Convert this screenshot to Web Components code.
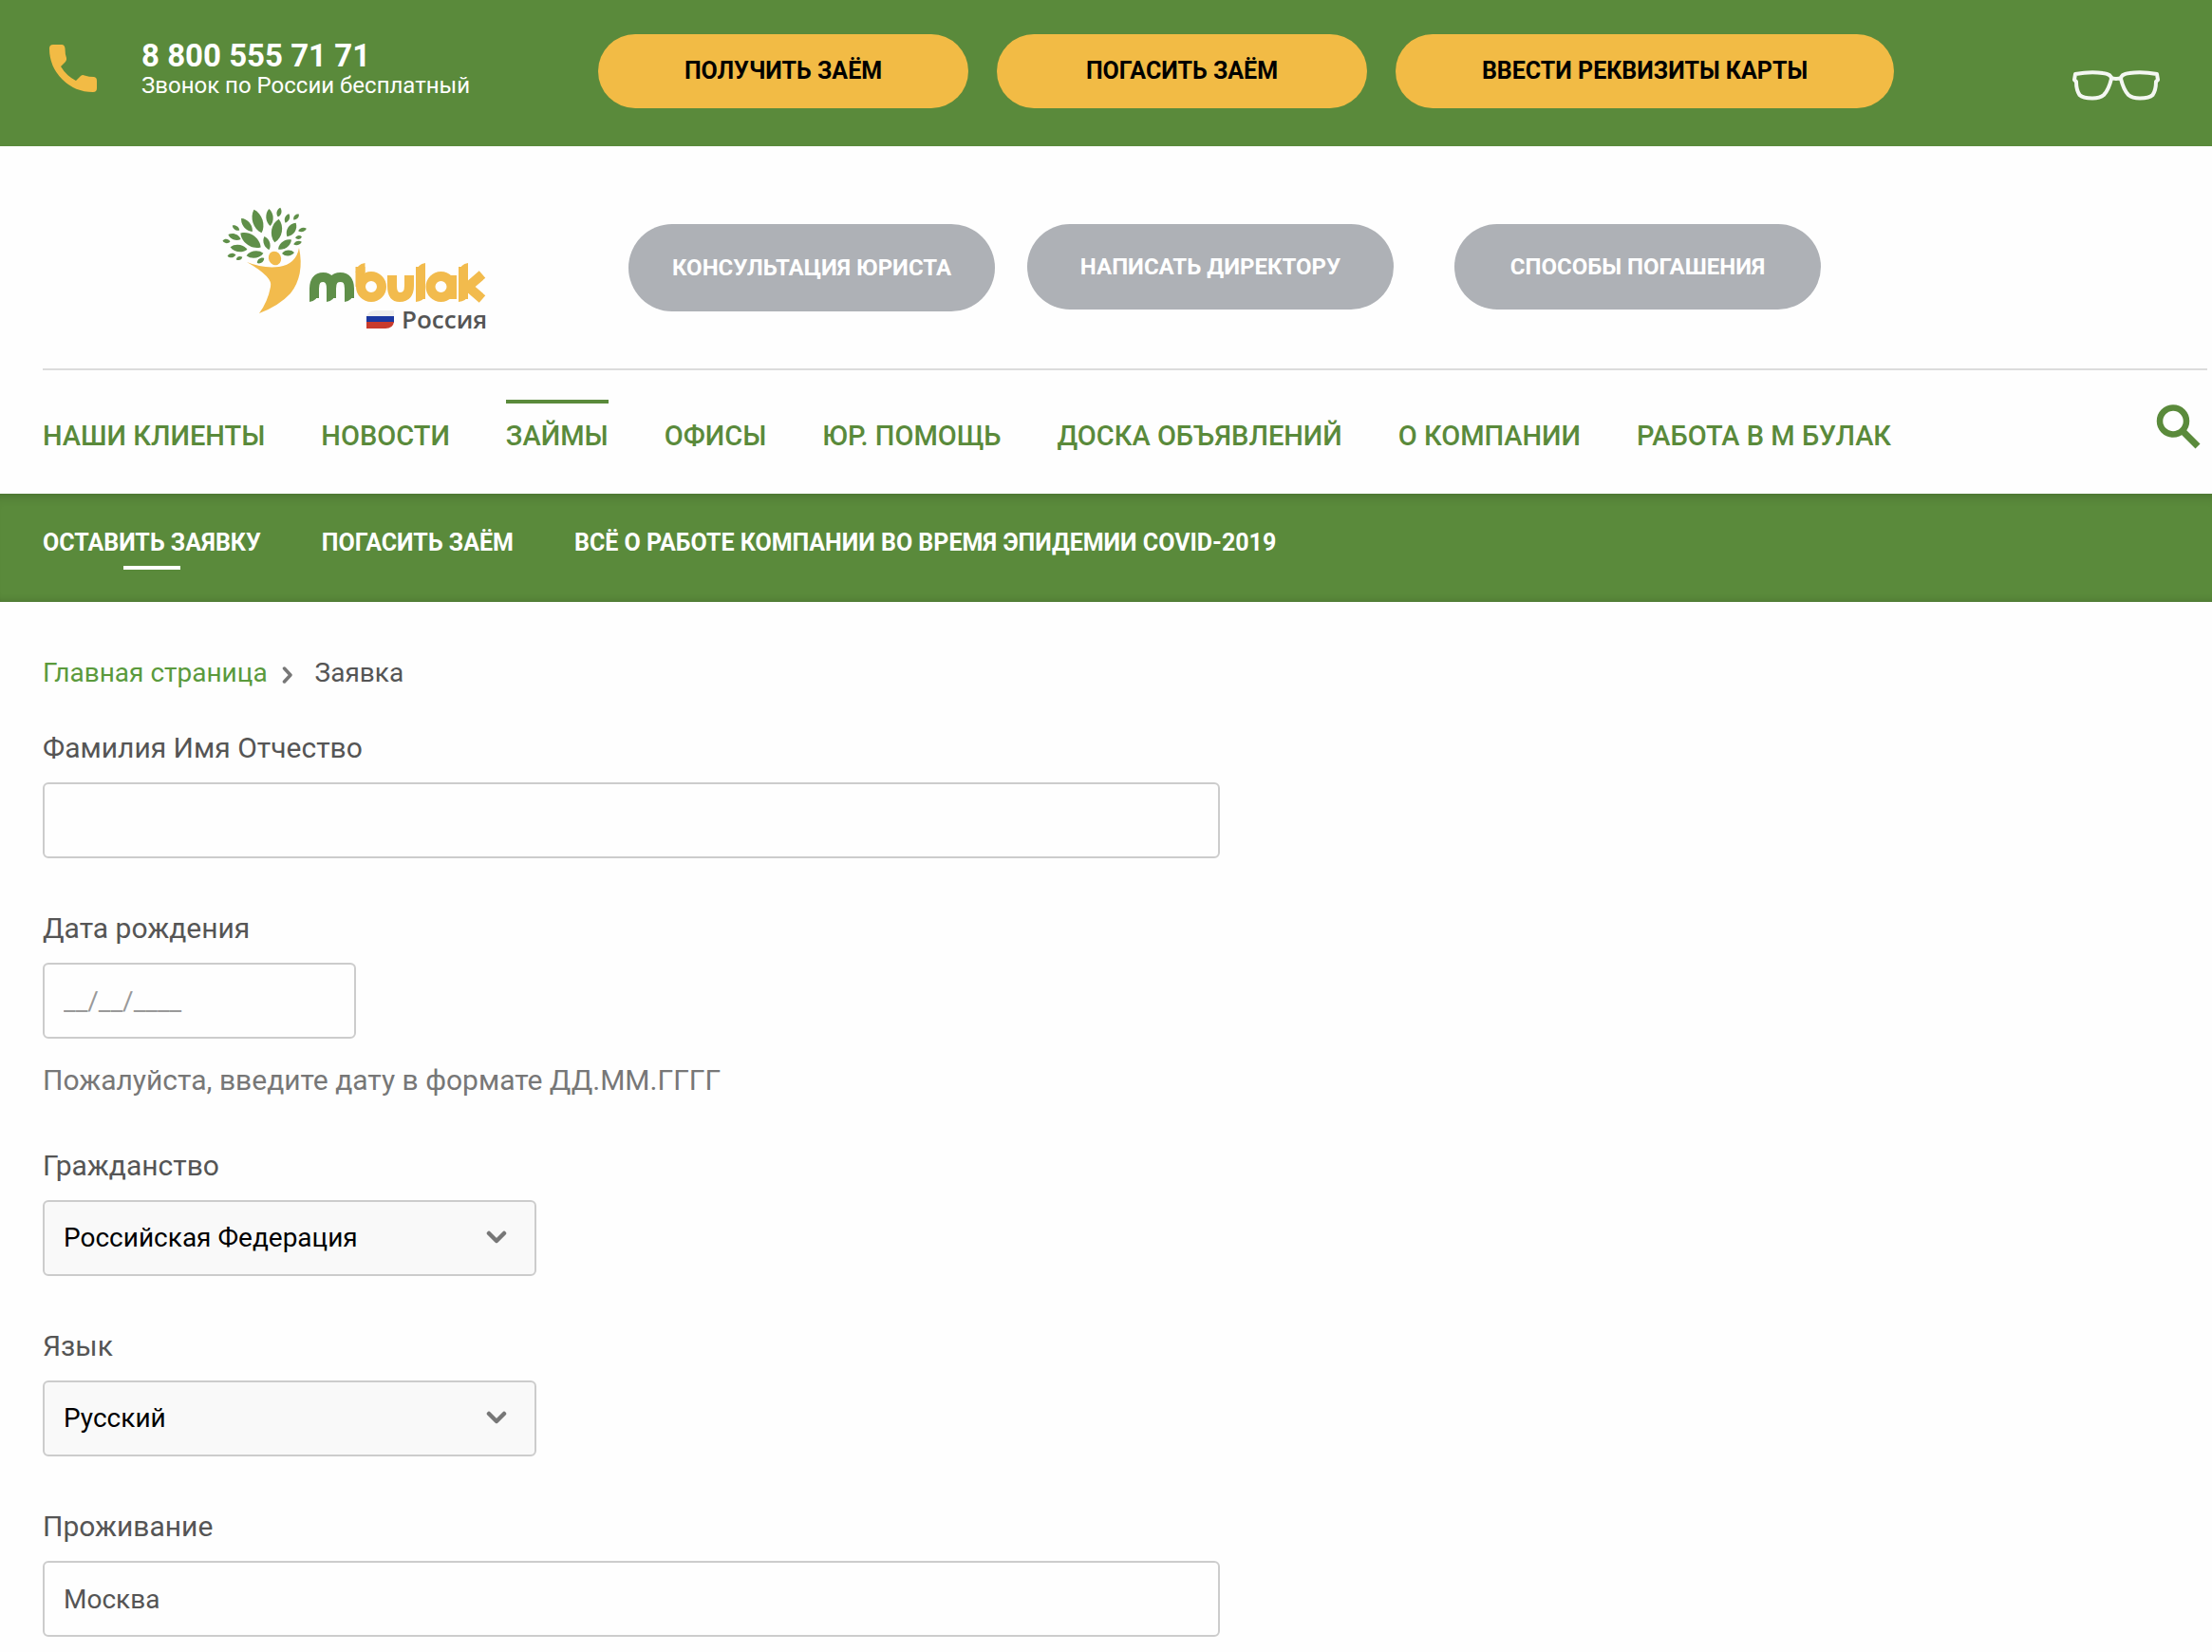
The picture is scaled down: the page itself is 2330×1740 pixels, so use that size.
<!DOCTYPE html>
<html lang="ru">
<head>
<meta charset="utf-8">
<title>Заявка — М Булак</title>
<style>
body{margin:0;background:#fefefe;font-family:Roboto,"Noto Sans",sans-serif;color:#555}
</style>
</head>
<body>
<mb-page></mb-page>
<script>
const define = (name, html, setup) => {
  const tpl = document.createElement('template');
  tpl.innerHTML = html;
  customElements.define(name, class extends HTMLElement {
    constructor() {
      super();
      this.attachShadow({mode: 'open'}).append(tpl.content.cloneNode(true));
    }
    connectedCallback() { if (setup) setup(this, this.shadowRoot); }
  });
};

define('mb-pill', `
<style>
:host{display:block;width:390px;--h:78px}
button{display:block;width:100%;height:var(--h);border:0;border-radius:46px;padding:0;background:#f2bb45;color:#000;font:700 25px/28px Roboto,sans-serif;text-transform:uppercase;cursor:pointer}
:host([wide]){width:525px}
:host([muted]){--h:90px;width:386px}
:host([muted][tall]){--h:92px}
:host([muted]) button{background:#aeb1b6;color:#fff;font-size:24px}
</style>
<button type="button"><slot></slot></button>`);

define('mb-topbar', `
<style>
:host{display:flex;align-items:flex-start;height:154px;background:#5a8a3b;color:#fff;box-sizing:border-box;padding:36px 54px 0 45px}
.phone{display:flex;width:585px;gap:40px}
.phone svg{margin-top:4px}
a{color:inherit;text-decoration:none;display:block}
.num{font-weight:700;font-size:33px;line-height:38px;margin-top:4px}
.sub{font-size:24px;line-height:24px}
.btns{display:flex;gap:30px}
.eye{margin:37px 0 0 auto;border:0;background:none;padding:0;display:block}
svg{display:block}
</style>
<div class="phone">
<svg width="64" height="64" viewBox="0 0 64 64" fill="#f2bb45"><path d="M11 7H20Q23 7 23.500 11Q23.500 17 25 21Q25.500 23.500 24 25L19 30Q25 40 35 45L40 40Q42 38.500 44 39.500Q49 41 54 41Q57 41.500 57 45V53Q57 57 53 57Q34 57 20.500 43.500Q7 30 7 11Q7 7 11 7Z"/></svg>
<div><a class="num" href="tel:88005557171">8 800 555 71 71</a><div class="sub">Звонок по России бесплатный</div></div>
</div>
<div class="btns"><mb-pill>Получить заём</mb-pill><mb-pill>Погасить заём</mb-pill><mb-pill wide>Ввести реквизиты карты</mb-pill></div>
<button class="eye" type="button" aria-label="Версия для слабовидящих"><svg width="94" height="34" viewBox="0 0 94 34" fill="none" stroke="#f4f7f2" stroke-width="4" stroke-linejoin="round"><path id="lens" d="M4 5Q20 2 33 4Q42 5 42 10Q39 22 34 27Q30 30.500 22 30.500Q12 30.500 8.500 27Q5 22 5 13L3 11Z"/><path d="M90 5Q74 2 61 4Q52 5 52 10Q55 22 60 27Q64 30.500 72 30.500Q82 30.500 85.500 27Q89 22 89 13L91 11ZM41 8.500Q47 11.500 53 8.500"/></svg></button>`);

define('mb-logo', `
<style>:host{display:block}a,svg{display:block}</style>
<a href="#" aria-label="mbulak Россия">
<svg width="300" height="150" viewBox="230 216 300 150">
<g id="leaves" fill="#5f8f49"></g>
<ellipse cx="289.500" cy="272" rx="6.500" ry="7.500" transform="rotate(-25 289.500 272)" fill="#f2bb4d"/>
<path d="M260 276Q277 283 294 281Q312 278 315 261Q321 290 306 309Q294 322 273 330Q282 318 285 302Q288 292 260 276Z" fill="#f2bb4d"/>
<g fill="none" stroke-width="10">
<path stroke="#5f8f49" d="M331 314V304Q331 292 340.500 292Q349 292 349 304V314M349 304Q349 292 358.500 292Q368 292 368 304V314"/>
<g stroke="#f2bb4d"><path d="M379.500 281V302"/><circle cx="391" cy="302" r="11"/><path d="M413 290V301Q413 313 421 313Q431 313 431 301V290M443 281V315"/><circle cx="464.500" cy="302" r="11"/><path d="M476 290V315M488 281V315M508 289L493 302L508 315"/></g>
</g>
<path fill="#5f8f49" d="M326 308V318Q334 317 336 308ZM344 308V318Q352 317 354 308ZM363 308V318Q371 317 373 308Z"/>
<path fill="#f2bb4d" d="M374.500 287Q376 278 384.500 277V287ZM438 287Q440 278 448 277V287ZM438 312V318Q446 317 448 312ZM483 287Q485 278 493 277V287ZM483 312V318Q491 317 493 312Z"/>
<path fill="#eee" d="M386 333Q388 327 396 327H415V333Z"/><path fill="#1c38a0" d="M386 333H415V340H386Z"/><path fill="#c83a2c" d="M386 339H415Q414 346 406 346H386Z"/>
<text x="423" y="346" font-family="'Open Sans','Noto Sans',sans-serif" font-weight="600" font-size="26" fill="#555">Россия</text>
</svg></a>`, (host, root) => {
  // Crown leaves: centre x, centre y, half length, half width, angle
  const leaves = [[271.5,233,13,5,72],[284,229,9,3.5,86],[294,223.5,5,2.3,104],[302.500,230,5,2.3,112],[312,228.500,4,2,134],[291.500,243,12.5,5.2,100],[307,242,8.5,4,123],[318.500,242,4.500,2,165],[260,237,9,3.500,50],[248.500,240,4.500,2,35],[247,249.500,7,3,20],[264,253,13,5.500,35],[238.500,254,4,2,8],[281,256,7.500,3,70],[300,257.500,8.500,3.500,145],[314.500,250,3.500,1.800,170],[313.500,256,4.500,1.900,163],[303.500,266.500,6.500,2.800,176],[251.500,261.500,9,3.500,8],[268.500,268,9,3.500,172],[244,269,4.500,2.200,170],[252,272,3.500,1.900,160],[274.500,274.500,4.500,2.200,145]];
  root.getElementById('leaves').innerHTML = leaves.map(([x, y, a, b, r]) =>
    `<path transform="translate(${x} ${y}) rotate(${r})" d="M${-a} 0C${-a / 2} ${-b * 1.4} ${a / 2} ${-b * 1.4} ${a} 0C${a / 2} ${b * 1.4} ${-a / 2} ${b * 1.4} ${-a} 0Z"/>`).join('');
});

define('mb-header', `
<style>
:host{display:block;margin:0 5px 0 45px;border-bottom:2px solid #dcdcdc;height:234px}
.row{display:flex;align-items:flex-start}
.brand{margin:62px 132px 0 185px}
.links{display:flex;align-items:flex-start;padding-top:82px}
.links mb-pill:nth-of-type(2){margin-left:34px}
.links mb-pill:nth-of-type(3){margin-left:64px}
</style>
<div class="row"><mb-logo class="brand"></mb-logo><div class="links"><mb-pill muted tall>Консультация юриста</mb-pill><mb-pill muted>Написать директору</mb-pill><mb-pill muted>Способы погашения</mb-pill></div></div>`);

define('mb-nav', `
<style>
:host{display:flex;justify-content:space-between;padding:0 11px 0 45px;height:130px}
nav{display:flex;gap:59px;padding-top:31px}
a{color:#5a8a3b;text-decoration:none;font-weight:500;font-size:29px;line-height:34px;text-transform:uppercase;padding-top:17px;border-top:4px solid transparent;align-self:flex-start}
a.on{border-image:linear-gradient(90deg,transparent 3px,#5a8a3b 3px,#5a8a3b calc(100% - 3px),transparent calc(100% - 3px)) 4}
button{border:0;background:none;padding:0;align-self:flex-start;margin-top:35px}
svg{display:block}
</style>
<nav><a href="#">Наши клиенты</a><a href="#">Новости</a><a href="#" class="on">Займы</a><a href="#">Офисы</a><a href="#">Юр. помощь</a><a href="#">Доска объявлений</a><a href="#">О компании</a><a href="#">Работа в М Булак</a></nav>
<button type="button" aria-label="Поиск"><svg width="48" height="48" viewBox="0 0 48 48" fill="none" stroke="#5a8a3b"><circle cx="18" cy="18.500" r="14" stroke-width="6.500"/><path d="M27 28L44 45" stroke-width="7"/></svg></button>`);

define('mb-subnav', `
<style>
:host{display:flex;gap:64px;height:114px;box-sizing:border-box;padding:38px 45px 0;background:#5a8a3b;box-shadow:inset 0 12px 12px -10px rgba(0,0,0,.2),inset 0 -8px 8px -8px rgba(0,0,0,.2)}
a{color:#fff;text-decoration:none;font-weight:700;font-size:25px;line-height:28px;text-transform:uppercase}
a.on::after{content:"";display:block;width:60px;height:4px;margin:10px auto 0;background:#fff}
</style>
<a href="#" class="on">Оставить заявку</a><a href="#">Погасить заём</a><a href="#">Всё о работе компании во время эпидемии COVID-2019</a>`);

define('mb-crumbs', `
<style>
:host{display:flex;align-items:center;font-size:28px;line-height:34px}
a{color:#5a9a3c;text-decoration:none}
svg{margin:4px 23px 0 15px}
</style>
<a href="#">Главная страница</a><svg width="12" height="18" viewBox="0 0 12 18" fill="none" stroke="#777" stroke-width="3.500" stroke-linecap="round" stroke-linejoin="round"><path d="M2.500 2L9 9L2.500 16"/></svg><span>Заявка</span>`);

define('mb-field', `
<style>
:host{display:block}
label{display:block;font-size:30px;line-height:36px;margin-bottom:18px}
.box{position:relative;width:1240px;max-width:100%}
:host([size=s]) .box{width:330px}
:host([size=m]) .box{width:520px}
input,select{display:block;width:100%;height:80px;box-sizing:border-box;border:2px solid #ccc;border-radius:6px;padding:0 20px;background:#fefefe;color:#555;font:400 28px/34px Roboto,sans-serif;appearance:none;outline:0}
select{background:#f9f9f9;color:#000}
input::placeholder{color:#999;opacity:1}
svg{position:absolute;right:31px;top:32px;pointer-events:none}
.help{font-size:30px;line-height:32px;margin-top:28px;color:#777}
</style>
<label for="c"></label><div class="box"></div>`, (host, root) => {
  root.querySelector('label').textContent = host.getAttribute('label');
  const box = root.querySelector('.box'), options = host.getAttribute('options');
  const c = document.createElement(options ? 'select' : 'input');
  c.id = 'c';
  if (options) options.split('|').forEach(o => c.add(new Option(o)));
  else {
    c.type = 'text';
    c.placeholder = host.getAttribute('placeholder') || '';
    c.value = host.getAttribute('value') || '';
  }
  box.append(c);
  if (options) box.insertAdjacentHTML('beforeend', '<svg width="22" height="16" viewBox="0 0 22 16" fill="none" stroke="#777" stroke-width="4.500" stroke-linecap="round" stroke-linejoin="round"><path d="M3 3L11 11L19 3"/></svg>');
  if (host.hasAttribute('help')) {
    const p = document.createElement('div');
    p.className = 'help';
    p.textContent = host.getAttribute('help');
    root.append(p);
  }
});

define('mb-page', `
<style>
:host{display:block}
main{padding:58px 45px 16px}
form{display:grid;gap:56px;margin-top:44px}
</style>
<mb-topbar></mb-topbar><mb-header></mb-header><mb-nav></mb-nav><mb-subnav></mb-subnav>
<main><mb-crumbs></mb-crumbs>
<form>
<mb-field label="Фамилия Имя Отчество"></mb-field>
<mb-field label="Дата рождения" size="s" placeholder="__/__/____" help="Пожалуйста, введите дату в формате ДД.ММ.ГГГГ"></mb-field>
<mb-field label="Гражданство" size="m" options="Российская Федерация"></mb-field>
<mb-field label="Язык" size="m" options="Русский"></mb-field>
<mb-field label="Проживание" value="Москва"></mb-field>
</form></main>`);
</script>
</body>
</html>
